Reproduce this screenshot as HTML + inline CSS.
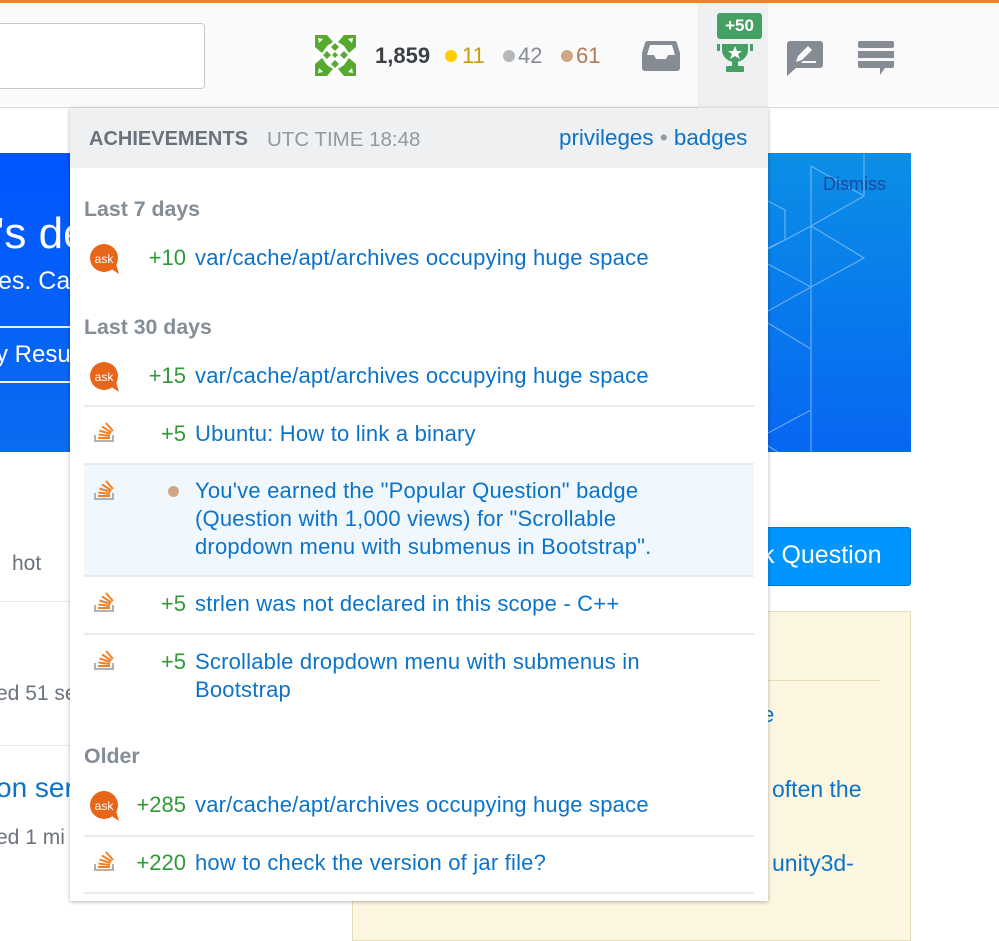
<!DOCTYPE html>
<html><head><meta charset="utf-8"><style>
*{margin:0;padding:0;box-sizing:border-box}
body{width:999px;height:932px;overflow:hidden;background:#fff;font-family:"Liberation Sans",Arial,sans-serif;position:relative}
.a{position:absolute;white-space:nowrap}
.lnk{color:#0c73c9}
.g{color:#2f9a36;width:100px;text-align:right;left:86px !important}
.row{position:absolute;left:84px;width:670px;border-bottom:2px solid #e8eaec}
.sec{position:absolute;left:84px;font-size:21.3px;font-weight:bold;color:#848d95}
.t{font-size:22px;line-height:28px;letter-spacing:.2px}
.g.t{letter-spacing:0}
</style></head><body>
<div class="a" style="left:0;top:0;width:999px;height:3px;background:#f48024"></div>
<div class="a" style="left:0;top:3px;width:999px;height:105px;background:#fafafb;border-bottom:1px solid #dcdee0"></div>
<div class="a" style="left:-10px;top:23px;width:215px;height:66px;background:#fff;border:1px solid #c6c9cc;border-radius:4px"></div>
<svg class="a" style="left:313px;top:33px" width="45" height="45" viewBox="0 0 45 45">
<rect width="45" height="45" fill="#fff"/>
<g fill="#56ab2f">
<polygon points="2,2 14,2 20,9 14,13 9,20 2,14"/><polygon points="43,2 31,2 25,9 31,13 36,20 43,14"/>
<polygon points="2,43 14,43 20,36 14,32 9,25 2,31"/><polygon points="43,43 31,43 25,36 31,32 36,25 43,31"/>
<polygon points="22,10 26,14 22,18 18,14"/><polygon points="22,27 26,31 22,35 18,31"/>
<polygon points="14,18 18,22 14,26 10,22"/><polygon points="31,18 35,22 31,26 27,22"/>
<polygon points="22,19 25,22 22,25 19,22"/>
</g>
<g fill="#fff"><polygon points="5,5 10,6 6,10"/><polygon points="40,5 35,6 39,10"/><polygon points="5,40 10,39 6,35"/><polygon points="40,40 35,39 39,35"/></g>
</svg>
<div class="a" style="left:375px;top:43px;font-size:22px;font-weight:bold;color:#3b4045">1,859</div>
<div class="a" style="left:445px;top:50px;width:12px;height:12px;border-radius:50%;background:#ffcc01"></div>
<div class="a" style="left:462px;top:43px;font-size:22px;color:#c89b0d">11</div>
<div class="a" style="left:503px;top:50px;width:12px;height:12px;border-radius:50%;background:#b4b8bc"></div>
<div class="a" style="left:518px;top:43px;font-size:22px;color:#858c93">42</div>
<div class="a" style="left:561px;top:50px;width:12px;height:12px;border-radius:50%;background:#d1a684"></div>
<div class="a" style="left:576px;top:43px;font-size:22px;color:#b47a54">61</div>
<svg class="a" style="left:641px;top:40px" width="40" height="32" viewBox="0 0 40 32"><path d="M7 1h26a3 3 0 0 1 3 2l3 10v15a3 3 0 0 1-3 3H4a3 3 0 0 1-3-3V13l3-10a3 3 0 0 1 3-2z" fill="#858c93"/><path d="M9 5h22l3 10h-7l-2 4h-10l-2-4H6z" fill="#fafafb"/></svg>
<div class="a" style="left:698px;top:3px;width:70px;height:106px;background:#eff0f1"></div>
<div class="a" style="left:717px;top:13px;width:45px;height:26px;background:#45a163;border-radius:3px;color:#fff;font-size:17px;font-weight:bold;text-align:center;line-height:26px">+50</div>
<svg class="a" style="left:717px;top:41px" width="36" height="31" viewBox="0 0 36 31"><g fill="#45a163"><rect x="0" y="3" width="3" height="7"/><rect x="33" y="3" width="3" height="7"/><path d="M5 3h26v6a13 12 0 0 1-26 0z"/><rect x="15" y="18" width="6" height="7"/><rect x="9" y="25" width="18" height="6" rx="1"/></g><polygon points="18,5 20,10 25,10 21,13 23,18 18,15 13,18 15,13 11,10 16,10" fill="#fff"/></svg>
<svg class="a" style="left:787px;top:41px" width="36" height="35" viewBox="0 0 36 35"><path d="M3 0h30a3 3 0 0 1 3 3v21a3 3 0 0 1-3 3H9l-9 8V3a3 3 0 0 1 3-3z" fill="#858c93"/><path d="M9 21l2-6 10-10 4 4-10 10zM16 20h13v2H14z" fill="#fafafb"/></svg>
<svg class="a" style="left:858px;top:41px" width="36" height="36" viewBox="0 0 36 36"><rect width="36" height="7" rx="2" fill="#858c93"/><rect y="10" width="36" height="7" fill="#858c93"/><path d="M0 20h36v5a2 2 0 0 1-2 2h-7l-5 7v-7H2a2 2 0 0 1-2-2z" fill="#858c93"/></svg>

<div class="a" style="left:0;top:153px;width:911px;height:299px;background:linear-gradient(180deg,#0a8fe6,#0766f2);overflow:hidden">
<div class="a" style="left:0;top:0;width:80px;height:299px;background:linear-gradient(180deg,#0055ff,#0a6cf0)"></div>
<div class="a" style="left:-4px;top:56px;font-size:44px;color:#fff">'s de</div>
<div class="a" style="left:-2px;top:114px;font-size:25px;color:#fff">es. Ca</div>
<div class="a" style="left:-20px;top:173px;width:110px;height:57px;border-top:2px solid #e8f0ff;border-bottom:2px solid #e8f0ff"></div>
<div class="a" style="left:-4px;top:188px;font-size:24px;color:#fff">y Resul</div>
<svg class="a" style="left:768px;top:0" width="143" height="299" viewBox="0 0 143 299" fill="none" stroke="#8fc4f5" stroke-width="1.2" opacity=".7"><path d="M43 13v286M43 13l53 30-53 30M0 48l17 9v30L0 95M96 0v43M43 73l53 32-53 29-43-23M0 96l43-23M43 134L0 158M0 170l43 26M43 257L0 280M0 293l10 6"/></svg>
<div class="a" style="left:823px;top:21px;font-size:18px;color:#1a4a9c">Dismiss</div>
</div>
<div class="a" style="left:12px;top:552px;font-size:21px;color:#6a737c">hot</div>
<div class="a" style="left:0;top:601px;width:70px;height:1px;background:#e4e6e8"></div>
<div class="a" style="left:-4px;top:682px;font-size:21px;color:#6a737c">ed 51 se</div>
<div class="a" style="left:0;top:745px;width:70px;height:1px;background:#e4e6e8"></div>
<div class="a" style="left:-4px;top:772px;font-size:28px;color:#0c73c9">on ser</div>
<div class="a" style="left:-4px;top:826px;font-size:21px;color:#6a737c">ed 1 mi</div>
<div class="a" style="left:700px;top:527px;width:211px;height:59px;background:#0095ff;border:1px solid #07c;border-radius:3px"></div>
<div class="a" style="left:762px;top:541px;font-size:25px;color:#fff">k Question</div>
<div class="a" style="left:352px;top:611px;width:559px;height:330px;background:#fdf7e2;border:1px solid #e6dcb5"></div>
<div class="a" style="left:760px;top:680px;width:120px;height:1px;background:#e6dcb5"></div>
<div class="a lnk" style="left:762px;top:702px;font-size:22px">e</div>
<div class="a lnk" style="left:772px;top:776px;font-size:23px">often the</div>
<div class="a lnk" style="left:772px;top:850px;font-size:23px">unity3d-</div>

<div class="a" style="left:70px;top:108px;width:698px;height:793px;background:#fff;box-shadow:0 1px 4px rgba(0,0,0,.3)">
<div class="a" style="left:0;top:0;width:698px;height:60px;background:#eff0f1"></div>
</div>
<div class="a" style="left:89px;top:128px;font-size:20px;font-weight:bold;color:#6a737c">ACHIEVEMENTS</div>
<div class="a" style="left:267px;top:128px;font-size:20.5px;color:#9199a1">UTC TIME 18:48</div>
<div class="a lnk" style="left:559px;top:125px;font-size:22.4px">privileges <span style="color:#9199a1">•</span> badges</div>

<div class="sec" style="top:197px">Last 7 days</div>
<svg class="a" style="left:90px;top:244px" width="30" height="30" viewBox="0 0 30 30"><circle cx="14" cy="14" r="14" fill="#e8661a"/><path d="M20 24l9 6-3-10z" fill="#e8661a"/><text x="14" y="19" font-family="Liberation Sans,sans-serif" font-size="12" fill="#fff" text-anchor="middle">ask</text></svg>
<div class="a t g" style="top:244px">+10</div>
<div class="a t lnk" style="left:195px;top:244px">var/cache/apt/archives occupying huge space</div>

<div class="sec" style="top:315px">Last 30 days</div>
<div class="row" style="top:342px;height:65px"></div>
<svg class="a" style="left:90px;top:362px" width="30" height="30" viewBox="0 0 30 30"><circle cx="14" cy="14" r="14" fill="#e8661a"/><path d="M20 24l9 6-3-10z" fill="#e8661a"/><text x="14" y="19" font-family="Liberation Sans,sans-serif" font-size="12" fill="#fff" text-anchor="middle">ask</text></svg>
<div class="a t g" style="top:362px">+15</div>
<div class="a t lnk" style="left:195px;top:362px">var/cache/apt/archives occupying huge space</div>

<div class="row" style="top:407px;height:58px"></div>
<div class="row" style="top:465px;height:112px;background:#f0f8fe"></div>
<div class="row" style="top:577px;height:58px"></div>

<svg class="a" style="left:94px;top:422px" width="22" height="22" viewBox="0 0 22 22"><path d="M1 13v6h18v-6" fill="none" stroke="#a3a9ae" stroke-width="1.8"/><g stroke="#f48024" stroke-width="2"><path d="M4 16h12M4.5 12.5l11.5 1.5M5.5 8.5l11 3.5M8 4.5l9.5 6M12 1l7 8"/></g></svg>
<div class="a t g" style="top:420px">+5</div>
<div class="a t lnk" style="left:195px;top:420px">Ubuntu: How to link a binary</div>

<svg class="a" style="left:94px;top:480px" width="22" height="22" viewBox="0 0 22 22"><path d="M1 13v6h18v-6" fill="none" stroke="#a3a9ae" stroke-width="1.8"/><g stroke="#f48024" stroke-width="2"><path d="M4 16h12M4.5 12.5l11.5 1.5M5.5 8.5l11 3.5M8 4.5l9.5 6M12 1l7 8"/></g></svg>
<div class="a" style="left:168px;top:486px;width:11px;height:11px;border-radius:50%;background:#d1a684"></div>
<div class="a t lnk" style="left:195px;top:477px">You've earned the "Popular Question" badge<br>(Question with 1,000 views) for "Scrollable<br>dropdown menu with submenus in Bootstrap".</div>

<svg class="a" style="left:94px;top:592px" width="22" height="22" viewBox="0 0 22 22"><path d="M1 13v6h18v-6" fill="none" stroke="#a3a9ae" stroke-width="1.8"/><g stroke="#f48024" stroke-width="2"><path d="M4 16h12M4.5 12.5l11.5 1.5M5.5 8.5l11 3.5M8 4.5l9.5 6M12 1l7 8"/></g></svg>
<div class="a t g" style="top:590px">+5</div>
<div class="a t lnk" style="left:195px;top:590px">strlen was not declared in this scope - C++</div>

<svg class="a" style="left:94px;top:650px" width="22" height="22" viewBox="0 0 22 22"><path d="M1 13v6h18v-6" fill="none" stroke="#a3a9ae" stroke-width="1.8"/><g stroke="#f48024" stroke-width="2"><path d="M4 16h12M4.5 12.5l11.5 1.5M5.5 8.5l11 3.5M8 4.5l9.5 6M12 1l7 8"/></g></svg>
<div class="a t g" style="top:648px">+5</div>
<div class="a t lnk" style="left:195px;top:648px">Scrollable dropdown menu with submenus in<br>Bootstrap</div>

<div class="sec" style="top:744px">Older</div>
<div class="row" style="top:770px;height:67px"></div>
<div class="row" style="top:837px;height:57px"></div>
<svg class="a" style="left:90px;top:791px" width="30" height="30" viewBox="0 0 30 30"><circle cx="14" cy="14" r="14" fill="#e8661a"/><path d="M20 24l9 6-3-10z" fill="#e8661a"/><text x="14" y="19" font-family="Liberation Sans,sans-serif" font-size="12" fill="#fff" text-anchor="middle">ask</text></svg>
<div class="a t g" style="top:791px">+285</div>
<div class="a t lnk" style="left:195px;top:791px">var/cache/apt/archives occupying huge space</div>
<svg class="a" style="left:94px;top:851px" width="22" height="22" viewBox="0 0 22 22"><path d="M1 13v6h18v-6" fill="none" stroke="#a3a9ae" stroke-width="1.8"/><g stroke="#f48024" stroke-width="2"><path d="M4 16h12M4.5 12.5l11.5 1.5M5.5 8.5l11 3.5M8 4.5l9.5 6M12 1l7 8"/></g></svg>
<div class="a t g" style="top:849px">+220</div>
<div class="a t lnk" style="left:195px;top:849px">how to check the version of jar file?</div>
</body></html>
